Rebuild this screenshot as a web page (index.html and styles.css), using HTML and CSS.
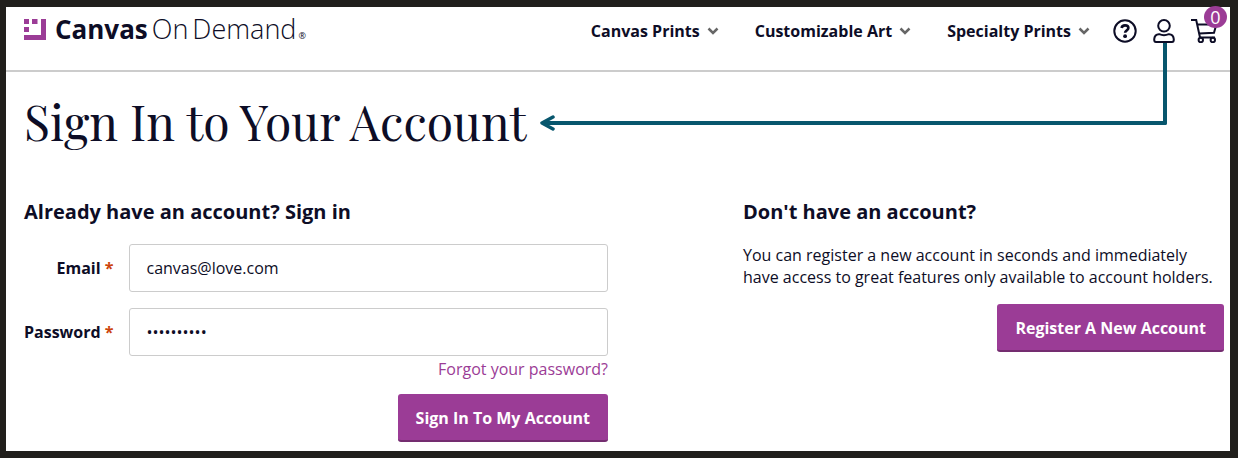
FILE: index.html
```html
<!DOCTYPE html>
<html lang="en">
<head>
<meta charset="utf-8">
<title>Sign In to Your Account</title>
<link rel="stylesheet" href="styles.css">
</head>
<body>
<div class="page">
  <header class="header">
    <a class="logo" href="#">
      <svg class="logo-mark" width="22" height="21" viewBox="0 0 22 21" aria-hidden="true"><path fill="#9b3c96" d="M0 0h5v5H0zM8 0h5.500v5H8zM0 8h5v5H0zM17 0h5v21H0v-5h17z"/></svg>
      <span class="logo-text"><strong>Canvas</strong><span>On</span><span>Demand</span><small>®</small></span>
    </a>
    <nav class="nav">
      <a class="nav-link" href="#">Canvas Prints <svg width="12" height="8" viewBox="0 0 12 8" aria-hidden="true"><path d="M1.500 1.500 6 6l4.500-4.500"/></svg></a>
      <a class="nav-link" href="#">Customizable Art <svg width="12" height="8" viewBox="0 0 12 8" aria-hidden="true"><path d="M1.500 1.500 6 6l4.500-4.500"/></svg></a>
      <a class="nav-link" href="#">Specialty Prints <svg width="12" height="8" viewBox="0 0 12 8" aria-hidden="true"><path d="M1.500 1.500 6 6l4.500-4.500"/></svg></a>
    </nav>
    <div class="tools">
      <a class="tool" href="#" aria-label="Help"><svg width="24" height="24" viewBox="0 0 24 24"><circle cx="12" cy="12" r="10.700"/><path stroke-width="2.600" d="M8.600 9c.3-1.800 1.700-2.600 3.400-2.600 2 0 3.400 1 3.400 2.700 0 2.300-3.300 2.300-3.300 4.700"/><circle class="dot" cx="12.100" cy="17.200" r="1.900"/></svg></a>
      <a class="tool" href="#" aria-label="Account"><svg width="22" height="24" viewBox="0 0 22 24"><circle cx="11" cy="6.800" r="5.800"/><path d="M6.200 15.200c3 1.300 6.600 1.300 9.600 0 3-.2 4.900 2 5 5.200 0 1.500-.6 2.500-1.800 2.500H3c-1.200 0-1.800-1-1.800-2.500.1-3.200 2-5.400 5-5.200z"/></svg></a>
      <a class="tool" href="#" aria-label="Cart, 0 items"><svg width="26" height="24" viewBox="0 0 26 24"><path d="M0 1h5.200L9 18.500h15M6.300 5.500h19L23 13.800 8 14.600"/><circle cx="9.800" cy="21" r="2.200"/><circle cx="21.800" cy="21" r="2.200"/></svg><span class="badge">0</span></a>
    </div>
  </header>
  <main class="main">
    <div class="title-row">
      <h1>Sign In to Your Account</h1>
      <div class="arrow" aria-hidden="true">
        <div class="arrow-line"></div>
        <svg class="arrow-head" width="16" height="16" viewBox="0 0 16 16"><path d="M13 2 2 8l11 6"/></svg>
      </div>
    </div>
    <div class="columns">
      <section>
        <h2>Already have an account? Sign in</h2>
        <form class="form">
          <label for="email">Email <span class="required">*</span></label>
          <input id="email" type="email" value="canvas@love.com">
          <label for="password">Password <span class="required">*</span></label>
          <input id="password" type="password" value="canvaslove">
          <div class="actions">
            <a class="forgot" href="#">Forgot your password?</a>
            <button class="button" type="button">Sign In To My Account</button>
          </div>
        </form>
      </section>
      <section class="register">
        <h2>Don't have an account?</h2>
        <p>You can register a new account in seconds and immediately have access to great features only available to account holders.</p>
        <button class="button" type="button">Register A New Account</button>
      </section>
    </div>
  </main>
</div>
</body>
</html>
```
FILE: styles.css
```css
* { box-sizing: border-box; }
body {
  margin: 0;
  padding: 7px 8px 7px 6px;
  min-height: 100vh;
  display: flex;
  background: #211f1c;
  color: #0d0d26;
  font: 16px/22px "Open Sans", "Noto Sans", sans-serif;
}
a { color: inherit; text-decoration: none; }
h1, h2, p { margin: 0; }
.page { flex: 1; background: #fff; }
.header {
  display: flex;
  align-items: flex-start;
  height: 65px;
  padding: 12px 13px 0 18px;
  border-bottom: 2px solid #ccc;
}
.logo { display: flex; align-items: flex-start; gap: 9px; margin-right: auto; }
.logo-text { display: flex; align-items: baseline; font-size: 26px; line-height: 20px; font-weight: 400; }
.logo-text strong { font-weight: 700; margin-right: 4px; }
.logo-text span { margin-right: 4px; font-size: 27px; font-weight: 300; }
.logo-text small { font-size: 9px; font-weight: 400; margin-left: -2px; }
.nav { display: flex; gap: 36px; margin-right: 23px; }
.nav-link { display: flex; align-items: center; gap: 7px; font-weight: 700; line-height: 24px; }
.nav-link svg { fill: none; stroke: #666; stroke-width: 2.500; }
.tools { display: flex; gap: 16px; }
.tool { position: relative; display: flex; }
.tool svg { fill: none; stroke: #0d0d26; stroke-width: 2; }
.tool .dot { fill: #0d0d26; stroke: none; }
.badge {
  position: absolute;
  top: -13px;
  right: -10px;
  width: 23px;
  height: 22px;
  border-radius: 50%;
  background: #9b3c96;
  color: #fff;
  font-size: 18px;
  line-height: 22px;
  text-align: center;
}
.main { padding: 18px 6px 9px 18px; }
.title-row { display: flex; }
h1 { font: 400 48px/62px "Playfair Display", "Liberation Serif", serif; }
.arrow { position: relative; flex: 1; margin: 0 57px 0 13px; }
.arrow-line {
  position: absolute;
  left: 2px;
  right: 0;
  bottom: 27px;
  height: 82px;
  border: solid #07566d;
  border-width: 0 4px 4px 0;
  border-radius: 0 0 2px 0;
}
.arrow-head {
  position: absolute;
  left: 0;
  bottom: 21px;
  fill: none;
  stroke: #07566d;
  stroke-width: 3.500;
  stroke-linecap: round;
  stroke-linejoin: round;
}
.columns { display: grid; grid-template-columns: 584fr 481fr; column-gap: 135px; padding-top: 48px; }
h2 { font-size: 20px; line-height: 24px; font-weight: 700; margin-bottom: 20px; }
.form { display: grid; grid-template-columns: auto 1fr; column-gap: 16px; row-gap: 16px; align-items: center; }
.form label { font-weight: 700; text-align: right; }
.required { color: #cc440c; }
.form input {
  width: 100%;
  height: 48px;
  padding: 0 16px;
  border: 1px solid #ccc;
  border-radius: 3px;
  background: #fff;
  color: #0d0d26;
  font: 400 16px/22px "Open Sans", sans-serif;
}
.actions { grid-column: 1 / -1; display: flex; flex-direction: column; align-items: flex-end; gap: 14px; margin-top: -14px; }
.forgot { color: #9b3c96; }
.button {
  height: 48px;
  padding: 2px 18px 0;
  border: 0;
  border-bottom: 2px solid #742d70;
  border-radius: 3px;
  background: #9b3c96;
  color: #fff;
  font: 700 16px/22px "Open Sans", sans-serif;
}
.register { display: flex; flex-direction: column; align-items: flex-end; }
.register h2, .register p { align-self: stretch; }
.register p { margin-bottom: 16px; }
```
